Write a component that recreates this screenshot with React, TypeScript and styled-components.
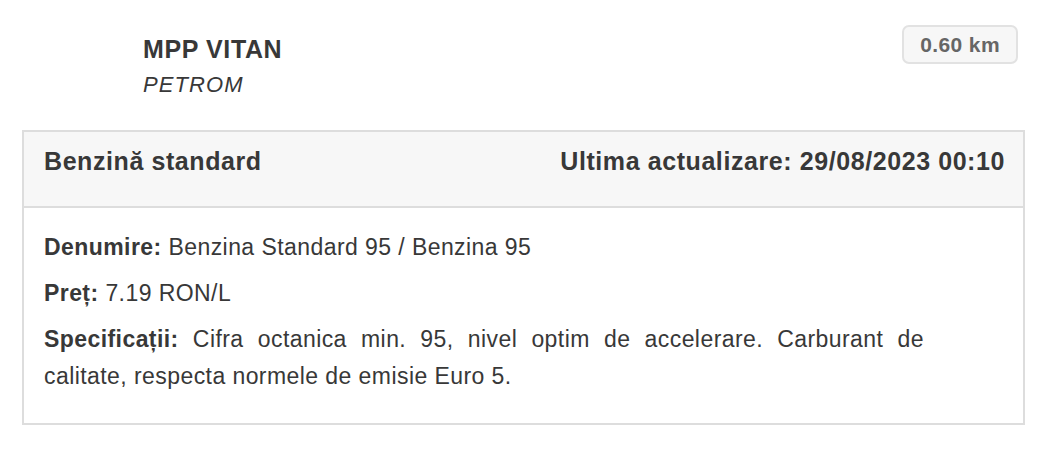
import * as React from 'react';
import styled, { createGlobalStyle } from 'styled-components';

interface Fuel {
  title: string;
  updated: string;
  name: string;
  price: string;
  specs: string;
}

const station = {
  name: 'MPP VITAN',
  brand: 'PETROM',
  distance: '0.60 km',
};

const fuel: Fuel = {
  title: 'Benzină standard',
  updated: 'Ultima actualizare: 29/08/2023 00:10',
  name: 'Benzina Standard 95 / Benzina 95',
  price: '7.19 RON/L',
  specs: 'Cifra octanica min. 95, nivel optim de accelerare. Carburant de calitate, respecta normele de emisie Euro 5.',
};

const GlobalStyle = createGlobalStyle`
  body {
    margin: 0;
    background: #fff;
    font-family: "Liberation Sans", Arial, Helvetica, sans-serif;
    color: #333;
  }
`;

const App = () => {
  return <Page>
    <GlobalStyle />
    <StationHeader>
      <StationInfo>
        <StationName>{station.name}</StationName>
        <StationBrand>{station.brand}</StationBrand>
      </StationInfo>
      <Distance>{station.distance}</Distance>
    </StationHeader>
    <Panel>
      <PanelHeading>
        <HeadingText>{fuel.title}</HeadingText>
        <HeadingText>{fuel.updated}</HeadingText>
      </PanelHeading>
      <PanelBody>
        <Line><Label>Denumire:</Label> {fuel.name}</Line>
        <Line><Label>Preț:</Label> {fuel.price}</Line>
        <Line justify><Label>Specificații:</Label> {fuel.specs}</Line>
      </PanelBody>
    </Panel>
  </Page>;
};

const Page = styled.div`
  padding: 25px 37px 0 22px;
`;

const StationHeader = styled.div`
  display: flex;
  justify-content: space-between;
  align-items: flex-start;
  padding-right: 7px;
`;

const StationInfo = styled.div`
  display: flex;
  flex-direction: column;
  padding: 6px 0 0 121px;
`;

const StationName = styled.div`
  font-size: 25px;
  font-weight: 700;
  line-height: 36px;
  letter-spacing: 0.6px;
  color: #383838;
`;

const StationBrand = styled.div`
  font-size: 22px;
  font-style: italic;
  line-height: 36px;
  letter-spacing: 1.1px;
  color: #383838;
`;

const Distance = styled.div`
  box-sizing: border-box;
  height: 39px;
  display: flex;
  align-items: center;
  padding: 0 16px;
  border: 2px solid #e2e2e2;
  border-radius: 7px;
  background: #f7f7f7;
  color: #666;
  font-size: 21px;
  font-weight: 700;
  letter-spacing: 0.4px;
`;

const Panel = styled.div`
  margin-top: 27px;
  border: 2px solid #ddd;
`;

const PanelHeading = styled.div`
  display: flex;
  justify-content: space-between;
  padding: 14px 18px 30px 20px;
  background: #f7f7f7;
  border-bottom: 2px solid #ddd;
`;

const HeadingText = styled.div`
  font-size: 25px;
  font-weight: 700;
  line-height: 30px;
  letter-spacing: 0.58px;
  color: #383838;
`;

const PanelBody = styled.div`
  padding: 21px 20px 28px 20px;
`;

const Line = styled.div<{ justify?: boolean }>`
  font-size: 23px;
  line-height: 37px;
  letter-spacing: 0.43px;
  color: #383838;
  & + & {
    margin-top: 9px;
  }
  ${({ justify }) => justify && `
    max-width: 880px;
    text-align: justify;
  `}
`;

const Label = styled.b`
  font-weight: 700;
`;

export default App;
